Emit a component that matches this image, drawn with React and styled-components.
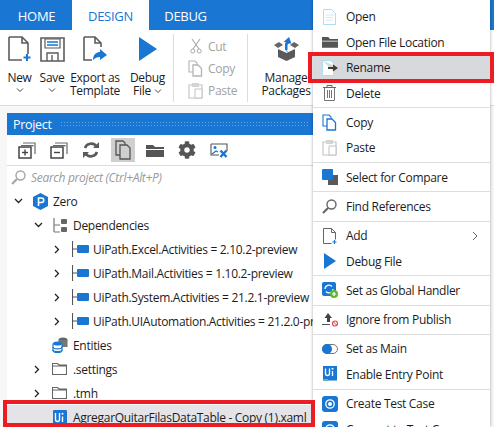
import React from 'react';
import styled, { createGlobalStyle } from 'styled-components';
import { FaCog } from 'react-icons/fa';

const GlobalStyle = createGlobalStyle`
  html, body {
    margin: 0;
    padding: 0;
    background: #f7f7f7;
  }
  * {
    box-sizing: border-box;
  }
`;

const BLUE = '#1976d2';
const GRAY = '#5c5c5c';

const Page = styled.div`
  position: relative;
  width: 494px;
  height: 427px;
  overflow: hidden;
  background: #f7f7f7;
  color: #1c1c24;
  font-family: "Open Sans", "Noto Sans", sans-serif;
  font-size: 12px;
  letter-spacing: -0.3px;
`;

const TabBar = styled.div`
  display: flex;
  height: 30px;
  background: ${BLUE};
  padding-left: 1px;
`;

const Tab = styled.div`
  display: flex;
  align-items: center;
  justify-content: center;
  width: ${(p) => p.$w}px;
  font-size: 13px;
  padding-top: 2px;
  color: ${(p) => (p.$active ? BLUE : '#fff')};
  background: ${(p) => (p.$active ? '#fff' : 'transparent')};
`;

const Ribbon = styled.div`
  display: flex;
  height: 76px;
  background: #fff;
  border-bottom: 1px solid #dcdcdc;
  padding-top: 4px;
`;

const RibbonButton = styled.div`
  display: flex;
  flex-direction: column;
  align-items: center;
  flex-shrink: 0;
  width: ${(p) => p.$w}px;
  line-height: 13px;
  text-align: center;
  white-space: nowrap;
`;

const IconSlot = styled.div`
  height: 30px;
  display: flex;
  align-items: center;
  justify-content: center;
  margin-bottom: 7px;
`;

const Chevron = styled.svg`
  display: block;
  margin: ${(p) => p.$top ?? 3}px auto 0;
`;

const InlineChevron = styled(Chevron)`
  display: inline-block;
  margin: 0 0 1px 3px;
`;

const RibbonDivider = styled.div`
  width: 1px;
  height: 68px;
  background: #dcdcdc;
  margin: 0 ${(p) => p.$right}px 0 ${(p) => p.$left}px;
`;

const ClipColumn = styled.div`
  display: flex;
  flex-direction: column;
  width: 73px;
  padding: 1px 0 0 14px;
`;

const ClipItem = styled.div`
  display: flex;
  align-items: center;
  gap: 5px;
  height: 22px;
  color: #a2a2a2;
`;

const ClipIcon = styled.span`
  display: flex;
  justify-content: center;
  width: 15px;
`;

const Panel = styled.section`
  margin: 7px 0 0 7px;
  width: 310px;
  height: 315px;
  background: #fff;
`;

const PanelHeader = styled.header`
  display: flex;
  align-items: center;
  gap: 8px;
  height: 22px;
  padding-left: 6px;
  background: ${BLUE};
  color: #fff;
  font-size: 12.5px;
`;

const Dots = styled.div`
  flex: 1;
  height: 7px;
  margin-right: 8px;
  background-image: radial-gradient(circle, rgba(255, 255, 255, 0.35) 0.7px, transparent 0.8px);
  background-size: 3px 3px;
`;

const Toolbar = styled.div`
  display: flex;
  align-items: center;
  height: 31px;
  padding: 0 0 0 8px;
  border-bottom: 1px solid #dedede;
`;

const ToolButton = styled.div`
  display: flex;
  align-items: center;
  justify-content: center;
  width: 24px;
  height: 24px;
  margin-right: 8px;
  background: ${(p) => (p.$active ? '#cfcfcf' : 'transparent')};
`;

const SearchRow = styled.div`
  display: flex;
  align-items: center;
  gap: 5px;
  height: 23px;
  padding-left: 4px;
  color: #9a9a9a;
  font-style: italic;
`;

const Tree = styled.div`
  display: flex;
  flex-direction: column;
`;

const TreeRow = styled.div`
  display: flex;
  align-items: center;
  height: 24px;
  padding-left: ${(p) => p.$indent}px;
  white-space: nowrap;
  background: ${(p) => (p.$selected ? '#e4e4e8' : 'transparent')};
`;

const Caret = styled.span`
  display: flex;
  justify-content: center;
  flex-shrink: 0;
  width: 16px;
  margin-right: 7px;
`;

const TreeIcon = styled.span`
  display: flex;
  flex-shrink: 0;
  width: ${(p) => p.$w ?? 20}px;
  justify-content: flex-start;
`;

const Menu = styled.div`
  position: absolute;
  top: 0;
  left: 313px;
  width: 177px;
  height: 427px;
  padding-top: 4px;
  background: #fff;
  box-shadow: 0 0 3px rgba(0, 0, 0, 0.35);
  overflow: hidden;
`;

const MenuRow = styled.div`
  display: flex;
  align-items: center;
  height: 25.5px;
  flex-shrink: 0;
  white-space: nowrap;
  background: ${(p) => (p.$hot ? '#d8d9dd' : 'transparent')};
`;

const MenuIcon = styled.span`
  display: flex;
  justify-content: center;
  width: 33px;
`;

const MenuLabel = styled.span`
  flex: 1;
`;

const SubmenuArrow = styled.svg`
  margin-right: 11px;
`;

const Separator = styled.div`
  height: 1px;
  margin: 1.4px 0 1.35px;
  background: #dedede;
`;

const RedFrame = styled.div`
  position: absolute;
  left: ${(p) => p.$x}px;
  top: ${(p) => p.$y}px;
  width: ${(p) => p.$w}px;
  height: ${(p) => p.$h}px;
  border: 4.5px solid #ec1c24;
`;

const Svg = ({ w = 16, h = 16, children }) => (
  <svg width={w} height={h} viewBox={`0 0 ${w} ${h}`} fill="none">{children}</svg>
);

const SmallChevron = () => (
  <Chevron width="8" height="6" viewBox="0 0 8 6" fill="none">
    <path d="M1 1.500l3 3 3-3" stroke="#444" strokeWidth="1" />
  </Chevron>
);

const CaretDown = () => (
  <svg width="9" height="6" viewBox="0 0 9 6" fill="none"><path d="M1 1l3.500 3.500L8 1" stroke="#222" strokeWidth="1.300" /></svg>
);

const CaretRight = () => (
  <svg width="6" height="9" viewBox="0 0 6 9" fill="none"><path d="M1 1l3.500 3.500L1 8" stroke="#222" strokeWidth="1.300" /></svg>
);

const NewIcon = () => (
  <Svg w={24} h={26}>
    <path d="M1 1h13l6 6v11M1 1v23h13M14 1v6h6" stroke={GRAY} strokeWidth="1.600" />
    <path d="M19 18v7M15.500 21.500h7" stroke={BLUE} strokeWidth="2" />
  </Svg>
);

const SaveIcon = () => (
  <Svg w={25} h={25}>
    <path d="M1 1h23v23H1z" stroke={GRAY} strokeWidth="1.600" />
    <path d="M5 2h15v9H5z" fill="#fff" stroke={GRAY} strokeWidth="1.200" />
    <path d="M7 5h11M7 8h11" stroke={BLUE} strokeWidth="1.600" />
    <path d="M7 24v-8h11v8M12 18v6" stroke={GRAY} strokeWidth="1.400" />
  </Svg>
);

const ExportIcon = () => (
  <Svg w={24} h={26}>
    <path d="M1 1h11l6 6v4M1 1v23h8M12 1v6h6" stroke={GRAY} strokeWidth="1.600" />
    <path d="M10 24c0-6 4-8 7-8v-3l7 6-7 5v-3c-3 0-5 1-7 3z" fill={BLUE} />
  </Svg>
);

const DebugIcon = ({ w = 18, h = 24 }) => (
  <svg width={w} height={h} viewBox="0 0 18 24"><path d="M0 0l18 12L0 24z" fill={BLUE} /></svg>
);

const CutIcon = () => (
  <Svg w={12} h={16}>
    <path d="M2 1l7 10M10 1L3 11" stroke="#a9a9a9" strokeWidth="1.100" />
    <circle cx="2.800" cy="13" r="2" stroke="#a9a9a9" />
    <circle cx="9.200" cy="13" r="2" stroke="#a9a9a9" />
  </Svg>
);

const CopyGlyph = ({ color = '#b4b4b4', back = '#b4b4b4' }) => (
  <Svg w={15} h={17}>
    <path d="M1 1h6l2 2v9H1z" stroke={back} strokeWidth="1.100" fill="#fff" />
    <path d="M5 5h5l3.500 3.500V16H5z" stroke={color} strokeWidth="1.300" fill="#fff" />
  </Svg>
);

const PasteGlyph = () => (
  <Svg w={15} h={17}>
    <path d="M1 3h13v13H1z" stroke="#c2c2c2" strokeWidth="1.100" />
    <path d="M4 1h7v4H4z" fill="#d4d4d4" />
    <path d="M7 7h7v9H7z" stroke="#c2c2c2" fill="#fff" />
  </Svg>
);

const PackageIcon = () => (
  <Svg w={25} h={24}>
    <path d="M4 12l8.500 4 8.500-4v8l-8.500 4L4 20z" fill="#5a5a5a" />
    <path d="M4 11L0 8l5-3 4 3zM21 11l4-3-5-3-4 3z" fill="#666" />
    <path d="M11 14V7c0-1 .5-1.500 1-2H9.500L15 0l2.500 6.500H15c-1 .5-1.500 1-1.500 2V15z" fill={BLUE} />
    <path d="M8.500 12l4 2 4-2" stroke="#fff" strokeWidth="1" />
  </Svg>
);

const ExpandIcon = ({ minus }) => (
  <Svg w={18} h={17}>
    <path d="M5 1h12v11" stroke="#6a6a6a" strokeWidth="1.200" />
    <path d="M3 3.500h12v1" stroke="#6a6a6a" strokeWidth="1.200" />
    <path d="M1 5h12v11H1z" stroke="#444" strokeWidth="1.500" />
    <path d="M4 10.500h6" stroke="#444" strokeWidth="1.400" />
    {!minus && <path d="M7 7.500v6" stroke="#444" strokeWidth="1.400" />}
  </Svg>
);

const RefreshIcon = () => (
  <Svg w={18} h={18}>
    <path d="M3 7a6.500 6.500 0 0 1 11.500-1.500M15 11a6.500 6.500 0 0 1-11.500 1.500" stroke="#5a5a5a" strokeWidth="2.600" />
    <path d="M11 7h6V1zM7 11H1v6z" fill="#5a5a5a" />
  </Svg>
);

const CopyTileIcon = () => (
  <Svg w={16} h={20}>
    <path d="M1 1h7l2 2v12H1z" stroke="#555" strokeWidth="1.300" />
    <path d="M5 5h7l3 3v11H5z" stroke="#555" strokeWidth="1.300" fill="#cfcfcf" />
  </Svg>
);

const FolderSolid = ({ w = 18, h = 13 }) => (
  <svg width={w} height={h} viewBox="0 0 18 13">
    <path d="M0 1h7l2 2h9v2H0zM0 6h18v7H0z" fill="#555" />
  </svg>
);

const ImageXIcon = () => (
  <Svg w={18} h={15}>
    <path d="M1 1h16v7M1 1v11h8" stroke="#555" strokeWidth="1.100" />
    <circle cx="5" cy="4.500" r="1.500" fill={BLUE} />
    <path d="M2 11l4-3 2 1" stroke={BLUE} strokeWidth="1.200" />
    <path d="M10.500 7.500l6 6.500M16.500 7.500l-6 6.500" stroke={BLUE} strokeWidth="2.400" />
  </Svg>
);

const SearchIcon = () => (
  <Svg w={15} h={15}>
    <circle cx="9.500" cy="5.500" r="4.500" stroke="#a5a5a5" strokeWidth="1.400" />
    <path d="M6 9l-5 5" stroke="#a5a5a5" strokeWidth="2.200" />
  </Svg>
);

const ReferencesIcon = () => (
  <Svg w={15} h={15}>
    <circle cx="9.500" cy="5.500" r="4.500" stroke="#666" strokeWidth="1.400" />
    <path d="M6 9l-5 5" stroke="#666" strokeWidth="2.200" />
  </Svg>
);

const ProjectLogo = () => (
  <Svg w={15} h={17}>
    <path d="M7.500 0L15 4v9l-7.500 4L0 13V4z" fill={BLUE} />
    <path d="M5.500 13V5h3a2 2 0 0 1 0 4.500h-3" stroke="#fff" strokeWidth="1.600" />
  </Svg>
);

const DependenciesIcon = () => (
  <Svg w={15} h={15}>
    <path d="M1 0v14M1 7h6M1 14h6" stroke="#777" strokeWidth="1.200" />
    <rect x="8" y="1" width="6" height="5" rx="1" fill="#666" />
    <rect x="8" y="9" width="6" height="5" rx="1" fill="#666" />
  </Svg>
);

const PackageBranchIcon = () => (
  <Svg w={17} h={16}>
    <path d="M0.500 0v16M0.500 8H6" stroke="#555" strokeWidth="1.100" />
    <rect x="5" y="4" width="12" height="8" rx="1" fill={BLUE} />
  </Svg>
);

const EntitiesIcon = () => (
  <Svg w={16} h={16}>
    <ellipse cx="11" cy="3" rx="4.500" ry="2.500" fill="#666" />
    <rect x="6.500" y="3" width="9" height="7" fill="#777" />
    <path d="M1 6.500v7c0 2.800 9 2.800 9 0v-7" fill="#fff" stroke={BLUE} strokeWidth="1.200" />
    <ellipse cx="5.500" cy="6.500" rx="4.500" ry="2" fill={BLUE} />
    <path d="M1 10c0 2.500 9 2.500 9 0M1 13c0 2 9 2 9 0" stroke={BLUE} strokeWidth="1.200" />
  </Svg>
);

const FolderOutline = () => (
  <Svg w={15} h={12}>
    <path d="M0.500 11.500v-11h5l1.500 1.500h7.500v9.500zM0.500 3h14" stroke="#666" strokeWidth="1.100" />
  </Svg>
);

const UiBadge = () => (
  <svg width="14" height="15" viewBox="0 0 14 15">
    <rect width="14" height="15" rx="1" fill={BLUE} />
    <path d="M2.500 3v6.500a2 2 0 0 0 4 0V3M9.500 6.500V12" stroke="#fff" strokeWidth="1.400" fill="none" />
    <circle cx="9.500" cy="3.800" r="1" fill="#fff" />
  </svg>
);

const OpenPage = () => (
  <Svg w={13} h={16}>
    <path d="M0.500 0.500h8l4 4v11h-12z" stroke="#a9def3" fill="#fff" />
    <path d="M3 6h7M3 8.500h7M3 11h7" stroke="#cfe9f5" />
  </Svg>
);

const RenameIcon = () => (
  <Svg w={16} h={16}>
    <path d="M0.500 0.500h8l3 3v2M0.500 0.500v15h11v-4" stroke="#a9def3" fill="#fff" />
    <path d="M6 7h5V4.500L16 8l-5 3.500V9H6z" fill="#443f2f" />
  </Svg>
);

const TrashIcon = () => (
  <Svg w={13} h={16}>
    <path d="M0 2.500h13M4 2V0.500h5V2" stroke="#666" />
    <path d="M1.500 3v12.500h10V3M4.500 5v8M6.500 5v8M8.500 5v8" stroke="#777" />
  </Svg>
);

const CompareIcon = () => (
  <Svg w={16} h={16}>
    <rect x="6" y="6" width="10" height="10" fill="#5a5a5a" />
    <rect x="0" y="0" width="11" height="11" rx="1" fill={BLUE} />
  </Svg>
);

const AddIcon = () => (
  <Svg w={14} h={16}>
    <path d="M0.500 0.500h8l4 4v7M0.500 0.500v15h8M8.500 0.500v4h4" stroke="#666" />
    <path d="M11.500 12v4M9.500 14h4" stroke={BLUE} strokeWidth="1.200" />
  </Svg>
);

const GlobalHandlerIcon = () => (
  <Svg w={16} h={16}>
    <rect x="0" y="0" width="14" height="14" rx="2" fill={BLUE} />
    <path d="M3 7a4 4 0 0 1 7-2.500M11 7a4 4 0 0 1-7 2.500" stroke="#fff" strokeWidth="1.200" />
    <circle cx="12" cy="12" r="4" fill="#5fb832" />
    <path d="M12 10v4M10 12h4" stroke="#fff" strokeWidth="1.200" />
  </Svg>
);

const IgnoreIcon = () => (
  <Svg w={16} h={14}>
    <path d="M5 0l4 5H7v4H4V5H1.500z" fill="#444" transform="translate(1)" />
    <path d="M0 11.500h8" stroke="#555" />
    <circle cx="13" cy="10.500" r="2.500" stroke="#e2434b" strokeWidth="1.200" />
    <path d="M11.300 8.800l3.400 3.400" stroke="#e2434b" />
  </Svg>
);

const ToggleIcon = () => (
  <Svg w={16} h={10}>
    <rect x="0.500" y="0.500" width="15" height="9" rx="4.500" stroke="#777" />
    <circle cx="5" cy="5" r="5" fill={BLUE} />
  </Svg>
);

const EntryPointIcon = () => (
  <Svg w={14} h={16}>
    <rect x="0" y="0" width="14" height="14.500" fill={BLUE} />
    <path d="M2.500 2.500v5a2 2 0 0 0 4 0v-5M9.500 5v5" stroke="#fff" strokeWidth="1.300" />
    <circle cx="9.500" cy="2.800" r="1" fill="#fff" />
    <path d="M0 14h5" stroke="#5fb8a0" strokeWidth="2" />
  </Svg>
);

const TestIcon = () => (
  <Svg w={16} h={16}>
    <rect width="16" height="16" rx="3" fill={BLUE} />
    <circle cx="8" cy="8" r="4.200" stroke="#fff" strokeWidth="1.300" />
    <circle cx="8" cy="8" r="2" fill="#fff" />
  </Svg>
);

const deps = [
  'UiPath.Excel.Activities = 2.10.2-preview',
  'UiPath.Mail.Activities = 1.10.2-preview',
  'UiPath.System.Activities = 21.2.1-preview',
  'UiPath.UIAutomation.Activities = 21.2.0-preview',
];

const menuItems = [
  { label: 'Open', icon: <OpenPage /> },
  { label: 'Open File Location', icon: <FolderSolid w={16} h={12} /> },
  { label: 'Rename', icon: <RenameIcon />, hot: true },
  { label: 'Delete', icon: <TrashIcon />, sep: true },
  { label: 'Copy', icon: <CopyGlyph color={BLUE} back={BLUE} /> },
  { label: 'Paste', icon: <PasteGlyph />, sep: true },
  { label: 'Select for Compare', icon: <CompareIcon />, sep: true },
  { label: 'Find References', icon: <ReferencesIcon />, sep: true },
  { label: 'Add', icon: <AddIcon />, arrow: true },
  { label: 'Debug File', icon: <DebugIcon w={12} h={16} />, sep: true },
  { label: 'Set as Global Handler', icon: <GlobalHandlerIcon />, sep: true },
  { label: 'Ignore from Publish', icon: <IgnoreIcon />, sep: true },
  { label: 'Set as Main', icon: <ToggleIcon /> },
  { label: 'Enable Entry Point', icon: <EntryPointIcon />, sep: true },
  { label: 'Create Test Case', icon: <TestIcon /> },
  { label: 'Connect to Test Case', icon: <TestIcon /> },
];

function App() {
  return (
    <Page>
      <GlobalStyle />
      <TabBar>
        <Tab $w={71}>HOME</Tab>
        <Tab $w={77} $active>DESIGN</Tab>
        <Tab $w={73}>DEBUG</Tab>
      </TabBar>
      <Ribbon>
        <RibbonButton $w={39}>
          <IconSlot><NewIcon /></IconSlot>
          New
          <SmallChevron />
        </RibbonButton>
        <RibbonButton $w={26}>
          <IconSlot><SaveIcon /></IconSlot>
          Save
          <SmallChevron />
        </RibbonButton>
        <RibbonButton $w={60}>
          <IconSlot><ExportIcon /></IconSlot>
          Export as<br />Template
        </RibbonButton>
        <RibbonButton $w={45}>
          <IconSlot><DebugIcon /></IconSlot>
          Debug<br />
          <span>
            File
            <InlineChevron width="8" height="6" viewBox="0 0 8 6" fill="none">
              <path d="M1 1.500l3 3 3-3" stroke="#444" strokeWidth="1" />
            </InlineChevron>
          </span>
        </RibbonButton>
        <RibbonDivider $left={3} $right={0} />
        <ClipColumn>
          <ClipItem><ClipIcon><CutIcon /></ClipIcon>Cut</ClipItem>
          <ClipItem><ClipIcon><CopyGlyph /></ClipIcon>Copy</ClipItem>
          <ClipItem><ClipIcon><PasteGlyph /></ClipIcon>Paste</ClipItem>
        </ClipColumn>
        <RibbonDivider $left={0} $right={13} />
        <RibbonButton $w={50}>
          <IconSlot><PackageIcon /></IconSlot>
          Manage<br />Packages
        </RibbonButton>
      </Ribbon>
      <Panel>
        <PanelHeader>Project<Dots /></PanelHeader>
        <Toolbar>
          <ToolButton><ExpandIcon /></ToolButton>
          <ToolButton><ExpandIcon minus /></ToolButton>
          <ToolButton><RefreshIcon /></ToolButton>
          <ToolButton $active><CopyTileIcon /></ToolButton>
          <ToolButton><FolderSolid /></ToolButton>
          <ToolButton><FaCog size={18} color="#555" /></ToolButton>
          <ToolButton><ImageXIcon /></ToolButton>
        </Toolbar>
        <SearchRow><SearchIcon />Search project (Ctrl+Alt+P)</SearchRow>
        <Tree>
          <TreeRow $indent={3}><Caret><CaretDown /></Caret><TreeIcon><ProjectLogo /></TreeIcon>Zero</TreeRow>
          <TreeRow $indent={23}><Caret><CaretDown /></Caret><TreeIcon><DependenciesIcon /></TreeIcon>Dependencies</TreeRow>
          {deps.map((dep) => (
            <TreeRow key={dep} $indent={42}><Caret><CaretRight /></Caret><TreeIcon $w={21}><PackageBranchIcon /></TreeIcon>{dep}</TreeRow>
          ))}
          <TreeRow $indent={45}><TreeIcon $w={21}><EntitiesIcon /></TreeIcon>Entities</TreeRow>
          <TreeRow $indent={22}><Caret><CaretRight /></Caret><TreeIcon $w={21}><FolderOutline /></TreeIcon>.settings</TreeRow>
          <TreeRow $indent={22}><Caret><CaretRight /></Caret><TreeIcon $w={21}><FolderOutline /></TreeIcon>.tmh</TreeRow>
          <TreeRow $indent={46} $selected><TreeIcon><UiBadge /></TreeIcon>AgregarQuitarFilasDataTable - Copy (1).xaml</TreeRow>
        </Tree>
      </Panel>
      <Menu>
        {menuItems.map((item) => (
          <React.Fragment key={item.label}>
            <MenuRow $hot={item.hot}>
              <MenuIcon>{item.icon}</MenuIcon>
              <MenuLabel>{item.label}</MenuLabel>
              {item.arrow && (
                <SubmenuArrow width="7" height="10" viewBox="0 0 7 10" fill="none">
                  <path d="M1 1l4 4-4 4" stroke="#666" />
                </SubmenuArrow>
              )}
            </MenuRow>
            {item.sep && <Separator />}
          </React.Fragment>
        ))}
      </Menu>
      <RedFrame $x={308} $y={52} $w={186} $h={31} />
      <RedFrame $x={3} $y={400} $w={312} $h={27} />
    </Page>
  );
}

export default App;
